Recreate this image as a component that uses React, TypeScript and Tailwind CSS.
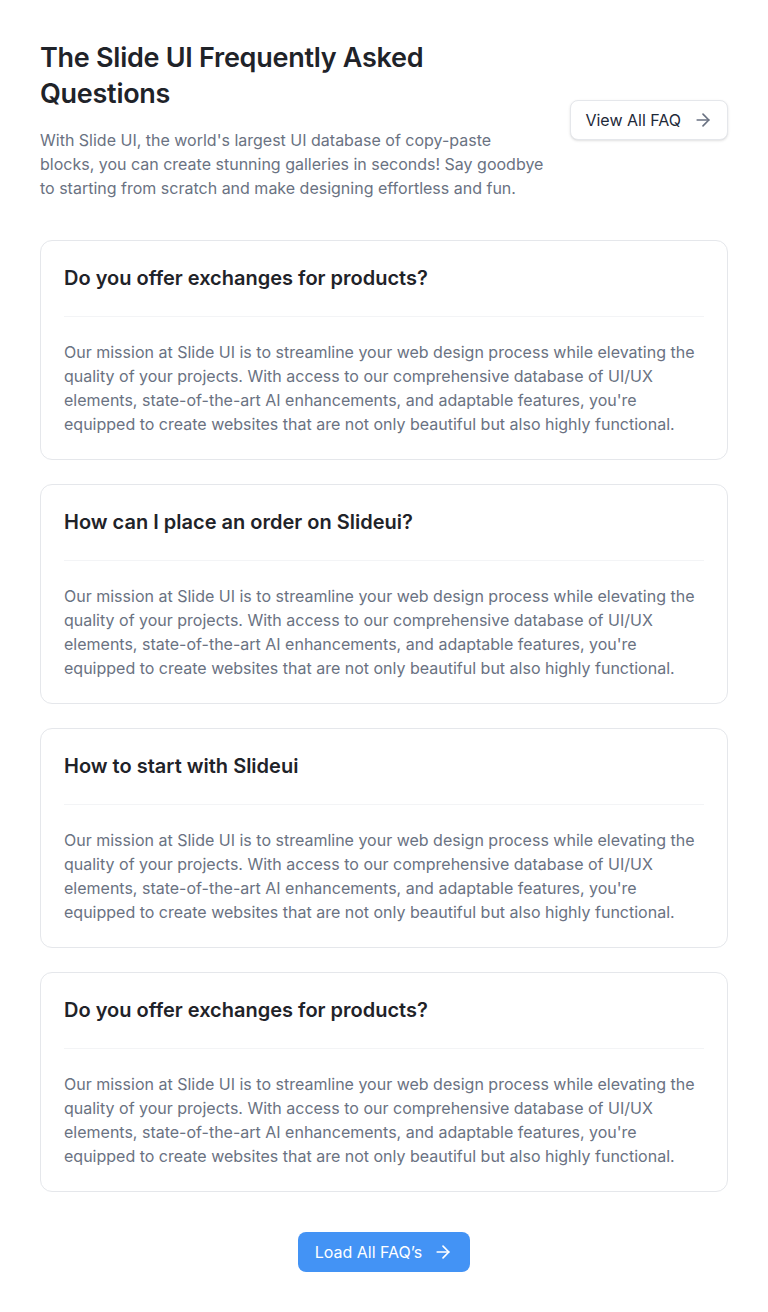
import React from "react";
import { ArrowRight } from "lucide-react";

const body =
  "Our mission at Slide UI is to streamline your web design process while elevating the quality of your projects. With access to our comprehensive database of UI/UX elements, state-of-the-art AI enhancements, and adaptable features, you're equipped to create websites that are not only beautiful but also highly functional.";

const faqs = [
  "Do you offer exchanges for products?",
  "How can I place an order on Slideui?",
  "How to start with Slideui",
  "Do you offer exchanges for products?",
];

export default function App() {
  return (
    <div
      className="bg-white px-10 py-10 text-gray-800"
      style={{ fontFamily: "Inter, 'Noto Sans', sans-serif" }}
    >
      <div className="flex items-center justify-between">
        <div className="w-[505px]">
          <h1 className="max-w-[440px] text-[27px] font-semibold leading-9 tracking-[-0.01em] text-[#1f2329]">
            The Slide UI Frequently Asked Questions
          </h1>
          <p className="mt-4 text-base leading-6 text-gray-500">
            With Slide UI, the world's largest UI database of copy-paste blocks, you can create stunning galleries in seconds! Say goodbye to starting from scratch and make designing effortless and fun.
          </p>
        </div>
        <button className="flex h-10 items-center gap-3 rounded-lg border border-gray-200 bg-white px-[14px] text-base font-normal text-gray-800 shadow-sm">
          View All FAQ
          <ArrowRight className="h-5 w-5 text-gray-500" strokeWidth={2} />
        </button>
      </div>

      <div className="mt-10 flex flex-col gap-6">
        {faqs.map((q, i) => (
          <div key={i} className="rounded-xl border border-gray-200 bg-white px-[23px] py-[23px]">
            <h3 className="text-xl font-semibold leading-7 text-[#1f2329]">{q}</h3>
            <div className="mt-6 mb-[23px] h-px bg-gray-100" />
            <p className="text-base leading-6 text-gray-500">{body}</p>
          </div>
        ))}
      </div>

      <div className="mt-10 flex justify-center">
        <button className="flex h-10 items-center gap-[11px] rounded-lg bg-[#4393f5] px-[17px] text-base font-normal text-white">
          Load All FAQ’s
          <ArrowRight className="h-5 w-5 text-white" strokeWidth={2} />
        </button>
      </div>
    </div>
  );
}
